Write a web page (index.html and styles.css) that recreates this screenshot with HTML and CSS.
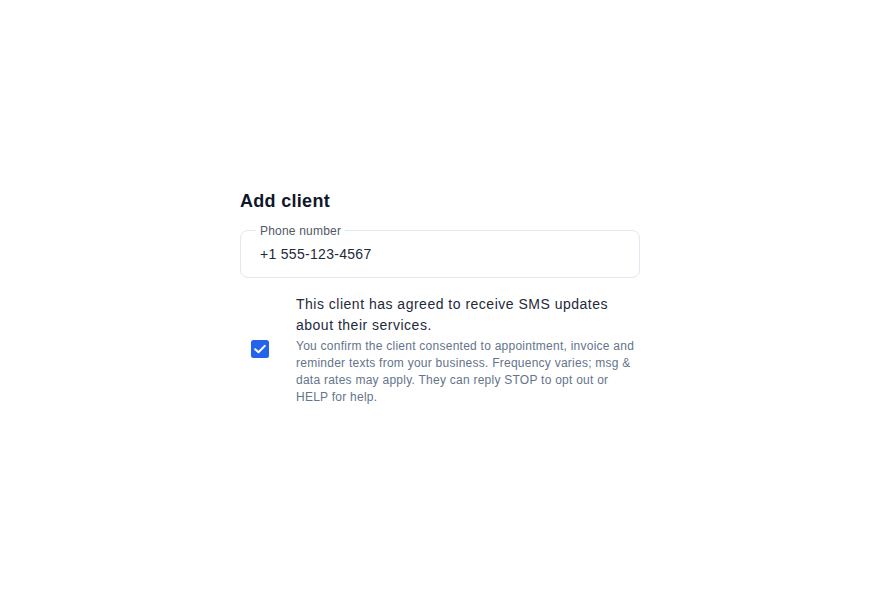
FILE: index.html
```html
<!DOCTYPE html>
<html lang="en">
<head>
<meta charset="utf-8">
<title>Add client</title>
<link rel="stylesheet" href="styles.css">
</head>
<body>
<main class="page">
  <section class="card">
    <h1 class="title">Add client</h1>
    <div class="field">
      <span class="field-label">Phone number</span>
      <span class="field-value">+1 555-123-4567</span>
    </div>
    <label class="consent">
      <span class="checkbox">
        <svg viewBox="0 0 18 18" width="18" height="18" aria-hidden="true">
          <rect x="0" y="0" width="18" height="18" rx="2.5" fill="#2563eb"/>
          <path d="M4.2 9.2 L7.5 12.3 L13.8 5.9" fill="none" stroke="#fff" stroke-width="2" stroke-linecap="round" stroke-linejoin="round"/>
        </svg>
      </span>
      <span class="consent-text">
        <span class="consent-main">This client has agreed to receive SMS updates about their services.</span>
        <span class="consent-sub">You confirm the client consented to appointment, invoice and reminder texts from your business. Frequency varies; msg &amp; data rates may apply. They can reply STOP to opt out or HELP for help.</span>
      </span>
    </label>
  </section>
</main>
</body>
</html>
```

FILE: styles.css
```css
* { box-sizing: border-box; }
html, body { margin: 0; padding: 0; background: #ffffff; }
body {
  font-family: "Liberation Sans", Arial, sans-serif;
  color: #0f172a;
}
.page {
  padding: 187px 0 0 240px;
}
.card {
  width: 400px;
  display: flex;
  flex-direction: column;
}
.title {
  margin: 0 0 15px 0;
  font-size: 18px;
  line-height: 28px;
  font-weight: 700;
  color: #0f172a;
  letter-spacing: 0.3px;
}
.field {
  position: relative;
  height: 48px;
  border: 1px solid #e2e8f0;
  border-radius: 8px;
  display: flex;
  align-items: center;
  padding: 0 19px;
}
.field-label {
  position: absolute;
  top: -8px;
  left: 15px;
  padding: 0 4px;
  background: #ffffff;
  font-size: 12px;
  line-height: 16px;
  color: #525866;
  letter-spacing: 0.2px;
}
.field-value {
  font-size: 14px;
  line-height: 20px;
  color: #1e293b;
  letter-spacing: 0.3px;
}
.consent {
  margin-top: 16px;
  display: flex;
  align-items: center;
}
.checkbox {
  flex: none;
  display: flex;
  padding-left: 11px;
  padding-bottom: 2px;
  width: 56px;
}
.checkbox svg { display: block; }
.consent-text {
  flex: 1;
  display: flex;
  flex-direction: column;
}
.consent-main {
  font-size: 14px;
  line-height: 21px;
  color: #1e293b;
  letter-spacing: 0.5px;
}
.consent-sub {
  margin-top: 2px;
  font-size: 12px;
  line-height: 17px;
  color: #64748b;
  letter-spacing: 0.25px;
}
```
